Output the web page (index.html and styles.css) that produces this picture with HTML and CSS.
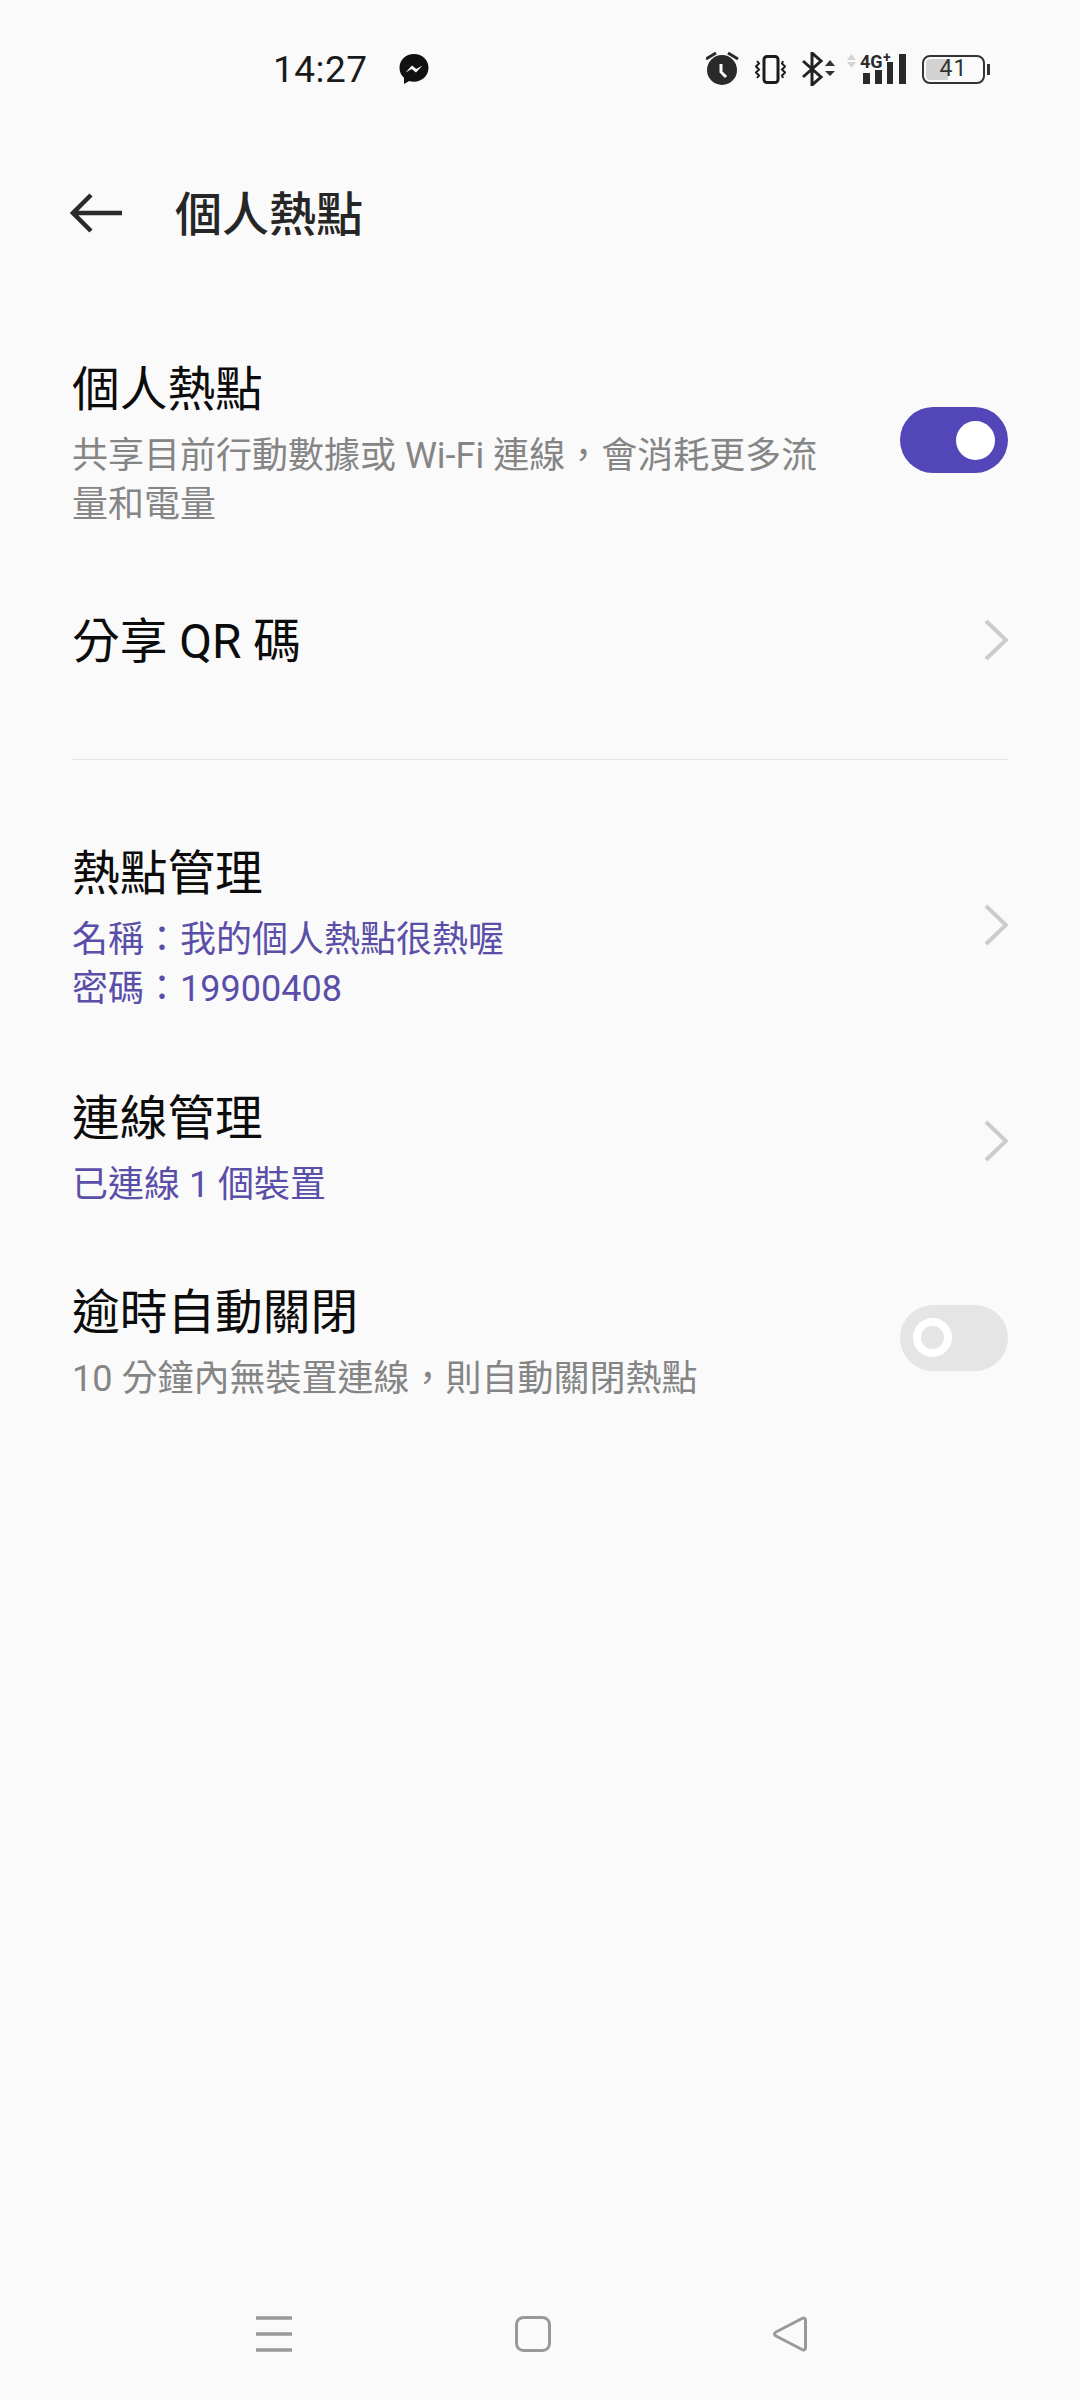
FILE: index.html
```html
<!DOCTYPE html>
<html lang="zh-Hant">
<head>
<meta charset="utf-8">
<title>個人熱點</title>
<link rel="stylesheet" href="styles.css">
</head>
<body>
<div class="page">
  <header class="status">
    <div class="status-left">
      <span class="clock">14:27</span>
      <svg class="msg" viewBox="0 0 32 32" width="32" height="32"><path d="M16 1C7.700 1 1.500 7 1.500 14.800c0 4.100 1.700 7.600 4.500 10v6.200l5.200-3c1.500.5 3 .7 4.800.7 8.300 0 14.500-6 14.500-13.900S24.300 1 16 1z" fill="#111"/><path d="M7.500 19.500l6.500-7 4.300 3.400 6.200-3.400-6.500 7-4.300-3.400z" fill="#fafafa"/></svg>
    </div>
    <div class="status-right">
      <svg width="34" height="34" viewBox="0 0 34 34"><circle cx="16" cy="18" r="15" fill="#2a2a2a"/><path d="M15 12v8l5 5" fill="none" stroke="#fafafa" stroke-width="3"/><path d="M0 7l10-6M32 7L22 1" stroke="#2a2a2a" stroke-width="3" fill="none"/></svg>
      <svg width="31" height="29" viewBox="0 0 31 29"><rect x="9" y="1.500" width="14" height="26" rx="3" fill="none" stroke="#1c1c1c" stroke-width="3"/><path d="M2 6l2 2.500-3 3 3 3-3 3 3 3-2 2.500M28 6l-1 2.500 3 3-3 3 3 3-3 3 1 2.500" fill="none" stroke="#1c1c1c" stroke-width="2"/></svg>
      <svg width="35" height="34" viewBox="0 0 35 34"><path d="M2 9l18 16-9 8V1l9 8L2 25" fill="none" stroke="#222" stroke-width="3"/><path d="M24 14l5-6 5 6zM24 19h10l-5 5z" fill="#333"/></svg>
      <svg class="signal" width="60" height="42" viewBox="0 -5 60 42"><path d="M1 7l4.500-6 4.500 6zM1 9h9l-4.500 6z" fill="#d4d4d4"/><text x="14" y="15" class="net">4G</text><text x="37" y="9" class="plus">+</text><rect x="17" y="20" width="7" height="11" fill="#2a2a2a"/><rect x="29" y="17" width="7" height="14" fill="#2a2a2a"/><rect x="41" y="9" width="6" height="22" fill="#2a2a2a"/><rect x="53" y="1" width="7" height="30" fill="#2a2a2a"/></svg>
      <div class="battery">
        <div class="battery-body"><span class="battery-fill"></span><span class="battery-num">41</span></div>
        <span class="battery-tip"></span>
      </div>
    </div>
  </header>

  <div class="appbar">
    <svg width="52" height="40" viewBox="0 0 52 40"><path d="M52 20H3M21 2L3 20l18 18" fill="none" stroke="#2a2a2a" stroke-width="4.500"/></svg>
    <h1 class="page-title">個人熱點</h1>
  </div>

  <main class="list">
    <div class="row r-hotspot">
      <div class="text">
        <div class="title">個人熱點</div>
        <div class="sub">共享目前行動數據或 Wi-Fi 連線，會消耗更多流<br>量和電量</div>
      </div>
      <span class="switch on"><span class="knob"></span></span>
    </div>
    <div class="row r-qr">
      <div class="text"><div class="title">分享 QR 碼</div></div>
      <svg class="chev" width="24" height="42" viewBox="0 0 24 42"><path d="M2 2l20 19L2 40" fill="none" stroke="#ccc" stroke-width="4"/></svg>
    </div>
    <hr class="divider">
    <div class="row r-manage">
      <div class="text">
        <div class="title">熱點管理</div>
        <div class="sub accent">名稱：我的個人熱點很熱喔<br>密碼：19900408</div>
      </div>
      <svg class="chev" width="24" height="42" viewBox="0 0 24 42"><path d="M2 2l20 19L2 40" fill="none" stroke="#ccc" stroke-width="4"/></svg>
    </div>
    <div class="row r-conn">
      <div class="text">
        <div class="title">連線管理</div>
        <div class="sub accent">已連線 1 個裝置</div>
      </div>
      <svg class="chev" width="24" height="42" viewBox="0 0 24 42"><path d="M2 2l20 19L2 40" fill="none" stroke="#ccc" stroke-width="4"/></svg>
    </div>
    <div class="row r-auto">
      <div class="text">
        <div class="title">逾時自動關閉</div>
        <div class="sub">10 分鐘內無裝置連線，則自動關閉熱點</div>
      </div>
      <span class="switch off"><span class="knob"></span></span>
    </div>
  </main>

  <nav class="navbar">
    <svg width="36" height="36" viewBox="0 0 36 36"><path d="M0 2h36M0 18h36M0 34h36" stroke="#999" stroke-width="3.500"/></svg>
    <svg width="36" height="36" viewBox="0 0 36 36"><rect x="1.500" y="1.500" width="33" height="33" rx="7" fill="none" stroke="#999" stroke-width="3"/></svg>
    <svg width="34" height="36" viewBox="0 0 34 36"><path d="M29 2.500c2-1 3.500 0 3.500 2v27c0 2-1.500 3-3.500 2L3 20c-2-1-2-3 0-4z" fill="none" stroke="#999" stroke-width="3"/></svg>
  </nav>
</div>
</body>
</html>
```

FILE: styles.css
```css
* { box-sizing: border-box; }
html, body { margin: 0; padding: 0; }
body {
  width: 1080px;
  height: 2400px;
  background: #fafafa;
  font-family: "Roboto", "Noto Sans CJK TC", sans-serif;
  color: #000;
  overflow: hidden;
}
.page {
  height: 2400px;
  display: flex;
  flex-direction: column;
}
.status {
  height: 70px;
  margin-top: 34px;
  padding: 0 90px 0 273px;
  display: flex;
  justify-content: space-between;
  align-items: center;
}
.status-left { display: flex; align-items: center; gap: 30px; }
.clock { font-size: 37px; color: #1a1a1a; letter-spacing: 0.5px; }
.status-right { display: flex; align-items: center; gap: 15px; }
.net { font: 700 18px "Roboto", sans-serif; fill: #2a2a2a; }
.plus { font: 700 14px "Roboto", sans-serif; fill: #2a2a2a; }
.signal { margin-left: -5px; }
.battery { display: flex; align-items: center; gap: 2px; margin-left: 1px; }
.battery-body {
  position: relative;
  width: 63px;
  height: 29px;
  border: 2.500px solid #333;
  border-radius: 8px;
  display: flex;
  align-items: center;
  justify-content: center;
}
.battery-fill { position: absolute; left: 2px; top: 2px; bottom: 2px; width: 22px; background: #d2d2d2; border-radius: 4px 0 0 4px; }
.battery-num { position: relative; font-size: 23px; line-height: 24px; color: #333; letter-spacing: 1px; }
.battery-tip { width: 3px; height: 11px; background: #333; }
.appbar {
  height: 80px;
  margin-top: 69px;
  padding-left: 70px;
  display: flex;
  align-items: center;
  gap: 53px;
}
.page-title { margin: 0 0 5px; font-size: 47px; font-weight: 500; color: #262626; }
.list { flex: 1; padding: 0 72px; }
.row { display: flex; align-items: center; justify-content: space-between; }
.text { padding-top: 1.500px; }
.title { font-size: 47.700px; line-height: 64px; color: #0c0c0c; }
.sub { margin-top: 10px; font-size: 36px; line-height: 49px; color: #858585; }
.accent { color: #5a4fa8; }
.r-hotspot { margin-top: 103px; }
.r-qr { margin-top: 78.500px; }
.divider { border: 0; height: 1px; background: #e6e6e6; margin: 85.500px 0 0; }
.r-manage { margin-top: 80px; }
.r-conn { margin-top: 71.500px; }
.r-auto { margin-top: 69.500px; }
.switch { position: relative; width: 108px; height: 66px; border-radius: 33px; flex: none; margin-bottom: 5.500px; }
.switch.on { background: #5346b8; }
.switch.off { background: #e5e5e5; margin-bottom: 7.500px; }
.knob { position: absolute; top: 13.500px; width: 39px; height: 39px; border-radius: 50%; }
.on .knob { right: 13px; background: #fff; }
.off .knob { left: 13px; background: #e5e5e5; border: 8px solid #fff; }
.chev { flex: none; margin-bottom: 1.500px; }
.r-manage .chev { margin-bottom: 4.500px; }
.r-conn .chev { margin-bottom: 12.500px; }
.navbar {
  height: 36px;
  margin-bottom: 48px;
  padding-left: 256px;
  padding-right: 273px;
  display: flex;
  justify-content: space-between;
}
```
